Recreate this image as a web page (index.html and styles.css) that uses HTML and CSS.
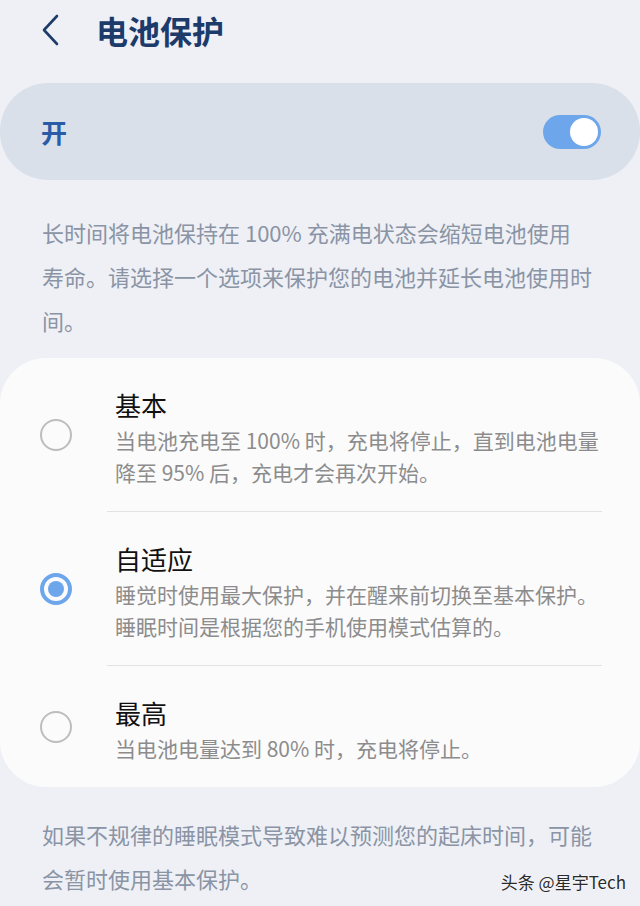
FILE: index.html
```html
<!DOCTYPE html>
<html lang="zh-CN">
<head>
  <meta charset="UTF-8">
  <meta name="viewport" content="width=device-width, initial-scale=1.0">
  <title>电池保护</title>
  <link rel="stylesheet" href="styles.css">
</head>
<body>
  <header class="topbar">
    <svg class="back" width="20" height="32" viewBox="0 0 20 32">
      <path d="M16 2 L3 16 L16 30" fill="none" stroke="#1d3c6b" stroke-width="2.6" stroke-linecap="round" stroke-linejoin="round"/>
    </svg>
    <h1>电池保护</h1>
  </header>

  <div class="switch-card">
    <span class="switch-label">开</span>
    <span class="toggle"><span class="knob"></span></span>
  </div>

  <p class="note">
    <span class="line">长时间将电池保持在 100% 充满电状态会缩短电池使用</span>
    <span class="line">寿命。请选择一个选项来保护您的电池并延长电池使用时</span>
    <span class="line">间。</span>
  </p>

  <div class="options">
    <div class="option">
      <span class="radio"></span>
      <div class="option-text">
        <div class="option-title">基本</div>
        <div class="option-desc">当电池充电至 100% 时，充电将停止，直到电池电量降至 95% 后，充电才会再次开始。</div>
      </div>
    </div>
    <div class="divider"></div>
    <div class="option">
      <span class="radio checked"></span>
      <div class="option-text">
        <div class="option-title">自适应</div>
        <div class="option-desc">睡觉时使用最大保护，并在醒来前切换至基本保护。睡眠时间是根据您的手机使用模式估算的。</div>
      </div>
    </div>
    <div class="divider"></div>
    <div class="option">
      <span class="radio"></span>
      <div class="option-text">
        <div class="option-title">最高</div>
        <div class="option-desc">当电池电量达到 80% 时，充电将停止。</div>
      </div>
    </div>
  </div>

  <p class="note footer-note">
    <span class="line">如果不规律的睡眠模式导致难以预测您的起床时间，可能</span>
    <span class="line">会暂时使用基本保护。</span>
  </p>

  <div class="watermark">头条 @星宇Tech</div>
</body>
</html>
```

FILE: styles.css
```css
body {
  margin: 0;
  width: 640px;
  height: 906px;
  overflow: hidden;
  position: relative;
  background-color: #eef0f5;
  font-family: "Noto Sans CJK SC", "Noto Sans", sans-serif;
}
.topbar {
  height: 60px;
  display: flex;
  align-items: center;
  padding-left: 41px;
}
.back {
  display: block;
}
.topbar h1 {
  margin: 0 0 0 35px;
  font-size: 32px;
  font-weight: 700;
  color: #1c3a6a;
  line-height: 1;
}
.switch-card {
  margin-top: 23px;
  height: 97px;
  background-color: #d9e0e9;
  border-radius: 48px;
  display: flex;
  align-items: center;
  justify-content: space-between;
  padding: 0 39px 0 41px;
}
.switch-label {
  font-size: 26px;
  font-weight: 700;
  color: #2a5ba6;
}
.toggle {
  width: 58px;
  height: 34px;
  border-radius: 17px;
  background-color: #6ea6ec;
  display: flex;
  align-items: center;
  justify-content: flex-end;
  padding-right: 3px;
  box-sizing: border-box;
}
.knob {
  width: 28px;
  height: 28px;
  border-radius: 50%;
  background-color: #ffffff;
}
.note {
  margin: 30px 0 0;
  padding: 0 30px 0 42px;
  font-size: 22px;
  line-height: 44px;
  color: #8a94a5;
}
.note .line {
  display: block;
  width: fit-content;
  white-space: nowrap;
}
.options {
  margin-top: 16px;
  background-color: #fbfbfc;
  border-radius: 46px;
  padding: 0 38px 0 40px;
}
.option {
  display: flex;
  align-items: center;
  padding: 29px 0 23px;
}
.radio {
  flex: none;
  width: 32px;
  height: 32px;
  border-radius: 50%;
  border: 2.5px solid #bdbdbd;
  box-sizing: border-box;
  margin-right: 43px;
  margin-top: -6px;
  display: flex;
  align-items: center;
  justify-content: center;
}
.radio.checked {
  border: 4px solid #6ea6ec;
}
.radio.checked::after {
  content: "";
  width: 16px;
  height: 16px;
  border-radius: 50%;
  background-color: #6ea6ec;
}
.option-title {
  font-size: 26px;
  line-height: 36px;
  color: #111111;
}
.option-desc {
  font-size: 21px;
  line-height: 32px;
  color: #8c8c8c;
  margin-top: 1px;
}
.divider {
  height: 1px;
  background-color: #e1e2e4;
  margin-left: 67px;
}
.footer-note {
  margin-top: 25px;
}
.watermark {
  position: absolute;
  right: 14px;
  bottom: 12px;
  font-size: 17px;
  color: #2b2b2b;
  text-shadow: 0 0 2px #ffffff;
}
```
